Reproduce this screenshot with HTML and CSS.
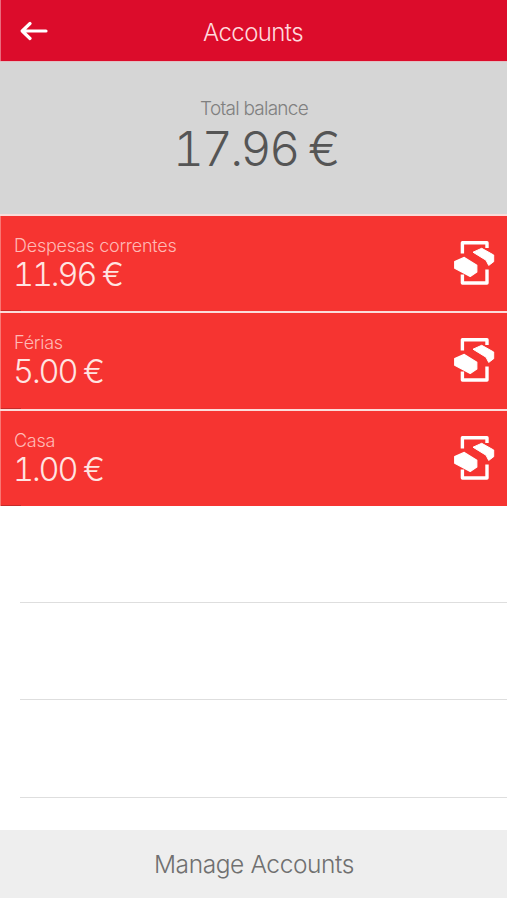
FILE: index.html
```html
<!DOCTYPE html>
<html lang="en">
<head>
<meta charset="utf-8">
<title>Accounts</title>
<link rel="stylesheet" href="styles.css">
</head>
<body>
<svg class="defs" aria-hidden="true">
  <symbol id="transfer" viewBox="0 0 42 46">
    <path d="M9.4 13.6V2.7H34V8M9.4 34.5V43H34V29.5" fill="none" stroke="currentColor" stroke-width="3.4" stroke-linejoin="round"/>
    <path d="M20 12.2L28.7 8.3L40.7 15V21.7L35.7 25.4L33 20.2Z" fill="currentColor" stroke="currentColor" stroke-linejoin="round"/>
    <path d="M1.7 21.6L11.3 17.4L23.8 25.2V32L17.2 36.4L1.7 28.2Z" fill="currentColor" stroke="currentColor" stroke-width="1.2" stroke-linejoin="round"/>
  </symbol>
</svg>
<main class="screen">
  <header class="topbar">
    <svg class="back" viewBox="0 0 28 20"><path d="M26 10H3M10 2.5L2.2 10L10 17.5" fill="none" stroke="#fff" stroke-width="3.2" stroke-linecap="round" stroke-linejoin="round"/></svg>
    <h1 class="title">Accounts</h1>
  </header>
  <section class="balance">
    <p class="balance-label">Total balance</p>
    <p class="balance-value">17.96 €</p>
  </section>
  <ul class="accounts">
    <li class="account"><div class="info"><p class="name">Despesas correntes</p><p class="amount">11.96 €</p></div><svg class="icon"><use href="#transfer"/></svg></li>
    <li class="account"><div class="info"><p class="name">Férias</p><p class="amount">5.00 €</p></div><svg class="icon"><use href="#transfer"/></svg></li>
    <li class="account"><div class="info"><p class="name">Casa</p><p class="amount">1.00 €</p></div><svg class="icon"><use href="#transfer"/></svg></li>
  </ul>
  <div class="empty"><div class="blank"></div><div class="blank"></div><div class="blank"></div></div>
  <footer class="manage">Manage Accounts</footer>
</main>
</body>
</html>
```
FILE: styles.css
```css
* { box-sizing: border-box; margin: 0; padding: 0; }
body { background: #fff; font-family: Inter, "Liberation Sans", sans-serif; font-weight: 300; }
.defs { display: none; }
.screen { width: 507px; height: 900px; display: flex; flex-direction: column; background: #fff; }
.topbar { height: 61px; background: #dc0c2b; display: grid; grid-template-columns: 55px 1fr 55px; align-items: center; border-left: 1px solid #ea6b7d; }
.back { width: 28px; height: 20px; margin-left: 19px; }
.title { color: #ffd9dd; font-size: 24px; line-height: 30px; font-weight: 300; text-align: center; letter-spacing: -0.6px; padding: 4px 2px 0 0; }
.balance { height: 153px; background: #d6d6d6; text-align: center; padding-top: 36px; border-top: 1px solid #e2bfc3; }
.balance-label { font-size: 19px; line-height: 22px; color: #808080; letter-spacing: -0.75px; padding-left: 1px; }
.balance-value { font-size: 48px; line-height: 58px; color: #555; font-weight: 300; font-variant-numeric: tabular-nums; font-kerning: none; letter-spacing: -2.5px; padding-left: 4px; }
.accounts { list-style: none; padding-top: 2px; background: #fbdcda; display: flex; flex-direction: column; gap: 2px; }
.account { height: 95.3px; background: linear-gradient(#c72a28, #c72a28) left bottom / 20px 1px no-repeat, #f63431; border-left: 1px solid #f97773; display: flex; justify-content: space-between; padding: 19px 12px 0 13px; }
.name { font-size: 18px; line-height: 22px; color: #ffb9b5; letter-spacing: -0.25px; }
.amount { font-size: 32.5px; line-height: 36px; color: #ffe5e2; font-variant-numeric: tabular-nums; font-kerning: none; letter-spacing: -2.1px; margin-left: -1px; }
.icon { width: 42px; height: 46px; margin-top: 5px; color: #fff; }
.empty { flex: 1; }
.blank { height: 97.3px; margin-left: 20px; border-bottom: 1px solid #dedede; }
.manage { height: 68px; margin-bottom: 2px; background: #eee; color: #707070; font-size: 24.5px; line-height: 69px; text-align: center; letter-spacing: -0.4px; padding-left: 1px; }
```
